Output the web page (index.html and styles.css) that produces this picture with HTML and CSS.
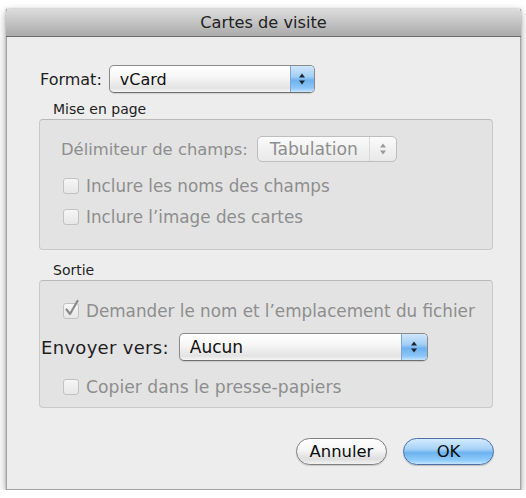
FILE: index.html
```html
<!DOCTYPE html>
<html lang="fr">
<head>
<meta charset="utf-8">
<title>Cartes de visite</title>
<link rel="stylesheet" href="styles.css">
</head>
<body>
<div class="window">
  <div class="titlebar">Cartes de visite</div>
  <div class="content">
    <div class="row format-row">
      <span class="label">Format:</span>
      <div class="popup popup-format">
        <span class="popup-text">vCard</span>
        <span class="popup-arrows blue">
          <svg width="8" height="14" viewBox="0 0 8 14"><polygon points="4,1.5 7,5.5 1,5.5"/><polygon points="1,8.5 7,8.5 4,12.5"/></svg>
        </span>
      </div>
    </div>

    <div class="group-label">Mise en page</div>
    <div class="group group-layout">
      <div class="row delim-row">
        <span class="label disabled">Délimiteur de champs:</span>
        <div class="popup popup-tab disabled-popup">
          <span class="popup-text">Tabulation</span>
          <span class="popup-arrows grey">
            <svg width="8" height="14" viewBox="0 0 8 14"><polygon points="4,1.5 7,5.5 1,5.5"/><polygon points="1,8.5 7,8.5 4,12.5"/></svg>
          </span>
        </div>
      </div>
      <div class="check check-first"><span class="box"></span><span class="check-text">Inclure les noms des champs</span></div>
      <div class="check check-second"><span class="box"></span><span class="check-text">Inclure l’image des cartes</span></div>
    </div>

    <div class="group-label sortie-label">Sortie</div>
    <div class="group group-output">
      <div class="check check-ask"><span class="box checked"><svg width="17" height="19" viewBox="0 0 17 19"><path d="M3.5 10.5 L7 15 L14.5 2" fill="none" stroke="#8a8a8a" stroke-width="2.2" stroke-linecap="round" stroke-linejoin="round"/></svg></span><span class="check-text">Demander le nom et l’emplacement du fichier</span></div>
      <div class="row send-row">
        <span class="label send-label">Envoyer vers:</span>
        <div class="popup popup-send">
          <span class="popup-text">Aucun</span>
          <span class="popup-arrows blue wide">
            <svg width="8" height="14" viewBox="0 0 8 14"><polygon points="4,1.5 7,5.5 1,5.5"/><polygon points="1,8.5 7,8.5 4,12.5"/></svg>
          </span>
        </div>
      </div>
      <div class="check check-copy"><span class="box"></span><span class="check-text">Copier dans le presse-papiers</span></div>
    </div>

    <div class="buttons">
      <button class="btn btn-cancel">Annuler</button>
      <button class="btn btn-ok">OK</button>
    </div>
  </div>
</div>
</body>
</html>
```

FILE: styles.css
```css
* {
  box-sizing: border-box;
}

html, body {
  margin: 0;
  padding: 0;
  background: #ffffff;
}

body {
  font-family: "DejaVu Sans", "Liberation Sans", sans-serif;
  font-size: 16px;
  color: #1e1e1e;
}

.window {
  margin: 9px 0 0 6px;
  width: 515px;
  height: 481px;
  background: #ededed;
  border: 1px solid #a4a4a4;
  border-top: none;
  box-shadow: 0 3px 9px rgba(0, 0, 0, 0.35), 0 0 2px rgba(0, 0, 0, 0.25);
  display: flex;
  flex-direction: column;
}

.titlebar {
  height: 28px;
  margin: 0 -1px;
  background: linear-gradient(#dcdcdc, #c6c6c6 45%, #aaaaaa);
  border-bottom: 1px solid #6c6c6c;
  border-radius: 4px 4px 0 0;
  text-align: center;
  line-height: 27px;
  font-size: 16.2px;
  color: #222;
}

.content {
  display: flex;
  flex-direction: column;
  padding: 28px 0 0 32px;
}

.row {
  display: flex;
  align-items: center;
}

.format-row {
  height: 28px;
  gap: 7px;
}

.format-row .label {
  margin-left: 1px;
}

.label {
  white-space: nowrap;
  color: #1e1e1e;
}

.label.disabled {
  color: #8e8e8e;
  font-size: 16.4px;
}

.popup {
  display: flex;
  align-items: stretch;
  border: 1px solid #8b8b8b;
  border-bottom-color: #6f6f6f;
  border-radius: 5px;
  background: linear-gradient(#ffffff, #f7f7f7 40%, #e3e3e3 85%, #f6f6f6);
  overflow: hidden;
  box-shadow: 0 1px 1px rgba(0, 0, 0, 0.12);
}

.popup-text {
  flex: 1;
  display: flex;
  align-items: center;
  padding-left: 10px;
  color: #111;
}

.popup-arrows {
  display: flex;
  align-items: center;
  justify-content: center;
  width: 24px;
}

.popup-arrows.wide {
  width: 26px;
}

.popup-arrows.blue {
  background: linear-gradient(#cfe6fb, #a3cff5 40%, #6eb2ee 55%, #8cc6f7 85%, #c8e6ff);
  border-left: 1px solid #7fa6d3;
}

.popup-arrows.blue svg {
  fill: #1c2430;
}

.popup-format {
  width: 206px;
  height: 28px;
}

.group-label {
  height: 18px;
  line-height: 18px;
  margin-top: 7px;
  margin-bottom: 1px;
  padding-left: 14px;
  font-size: 14px;
  color: #1e1e1e;
}

.sortie-label {
  margin-top: 11px;
}

.group {
  width: 454px;
  background: #e3e3e3;
  border: 1px solid #c9c9c9;
  border-top-color: #b9b9b9;
  border-radius: 4px;
  display: flex;
  flex-direction: column;
  padding-left: 21px;
}

.group-layout {
  height: 131px;
  padding-top: 16px;
}

.group-output {
  height: 128px;
  padding-top: 19px;
}

.delim-row {
  height: 26px;
  gap: 9px;
}

.disabled-popup {
  border-color: #bdbdbd;
  box-shadow: none;
  background: linear-gradient(#fbfbfb, #f1f1f1 50%, #e9e9e9);
}

.popup-tab {
  width: 140px;
  height: 26px;
}

.popup-tab .popup-text {
  padding-left: 12px;
  color: #8e8e8e;
  font-size: 17.2px;
}

.popup-arrows.grey {
  width: 27px;
  border-left: 1px solid #dadada;
}

.popup-arrows.grey svg {
  fill: #9a9a9a;
}

.check {
  display: flex;
  align-items: center;
  height: 22px;
  color: #8e8e8e;
  white-space: nowrap;
  font-size: 16.8px;
}

.check-first {
  margin-top: 13px;
}

.check-second {
  margin-top: 9px;
}

.check-copy {
  margin-top: 15px;
}

.check-copy .check-text {
  font-size: 17.2px;
}

.box {
  position: relative;
  width: 16px;
  height: 16px;
  margin-left: 2px;
  margin-right: 7px;
  border: 1px solid #c2c2c2;
  border-radius: 3px;
  background: linear-gradient(#f6f6f6, #e7e7e7);
  flex: none;
}

.box.checked svg {
  position: absolute;
  left: -1px;
  top: -5px;
}

.send-row {
  height: 28px;
  margin-top: 11px;
  margin-left: -20px;
  gap: 10px;
}

.send-label {
  letter-spacing: 0.3px;
  font-size: 18px;
}

.popup-send {
  width: 249px;
  height: 28px;
}

.popup-send .popup-text {
  font-size: 17px;
}

.buttons {
  display: flex;
  justify-content: flex-end;
  gap: 16px;
  width: 455px;
  margin-top: 30px;
}

.btn {
  width: 91px;
  height: 27px;
  border-radius: 14px;
  font-family: "DejaVu Sans", "Liberation Sans", sans-serif;
  font-size: 16.4px;
  color: #0d0d0d;
  padding: 0;
  line-height: 24px;
}

.btn-cancel {
  border: 1px solid #7f7f7f;
  background: linear-gradient(#ffffff, #f5f5f5 45%, #dedede 80%, #f2f2f2);
  box-shadow: 0 1px 1px rgba(0, 0, 0, 0.15);
}

.btn-ok {
  border: 1px solid #4f6fa6;
  background: linear-gradient(#d3ebff, #a7d3f8 40%, #6db3ef 55%, #8fcbfa 85%, #c4e6ff);
  box-shadow: 0 1px 1px rgba(0, 0, 0, 0.2);
}
```
